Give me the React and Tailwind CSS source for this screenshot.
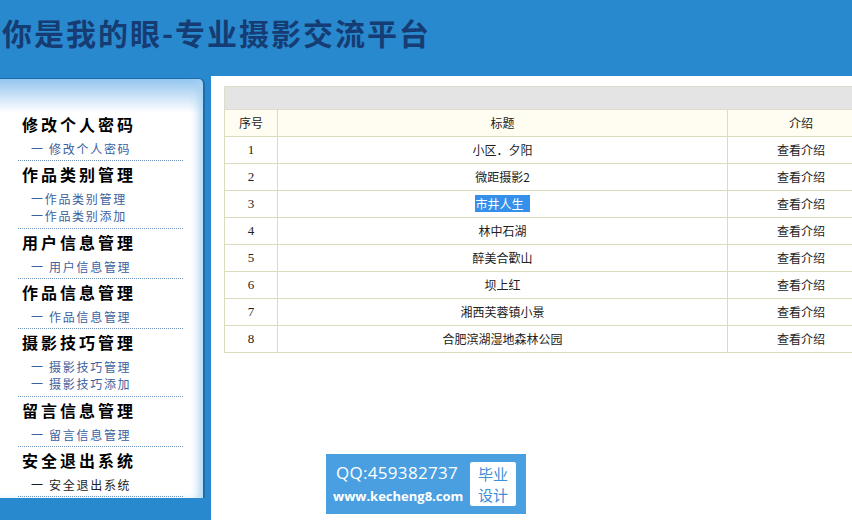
import React from "react";

const menu = [
  { title: "修改个人密码", items: ["一 修改个人密码"] },
  { title: "作品类别管理", items: ["一作品类别管理", "一作品类别添加"] },
  { title: "用户信息管理", items: ["一 用户信息管理"] },
  { title: "作品信息管理", items: ["一 作品信息管理"] },
  { title: "摄影技巧管理", items: ["一 摄影技巧管理", "一 摄影技巧添加"] },
  { title: "留言信息管理", items: ["一 留言信息管理"] },
  { title: "安全退出系统", items: ["一 安全退出系统"], dark: true },
];

const rows = [
  "小区．夕阳",
  "微距摄影2",
  "市井人生",
  "林中石湖",
  "醉美合歡山",
  "坝上红",
  "湘西芙蓉镇小景",
  "合肥滨湖湿地森林公园",
];

const cjk = { fontFamily: '"Noto Sans CJK SC", sans-serif' };

const App = () => {
  return (
    <div
      className="relative w-[852px] h-[520px] bg-[#2989cf] flex flex-col overflow-hidden"
      style={cjk}
    >
      {/* header */}
      <div className="h-[77px] shrink-0 pl-[2px] pt-[11px]">
        <h1 className="text-[30px] leading-[42px] font-bold tracking-[2px] text-[#163c74]">
          你是我的眼-专业摄影交流平台
        </h1>
      </div>

      <div className="flex flex-1 min-h-0">
        {/* sidebar */}
        <div className="w-[211px] shrink-0 flex flex-col">
          <div className="mt-[1px] w-[205px] h-[420px] rounded-tr-[6px] border-t border-r-2 border-[#1d6cab] bg-gradient-to-b from-[#93c5ee] via-white via-[8%] to-white shadow-[inset_-8px_0_10px_-4px_#a8d2f4] pt-[32px]">
            {menu.map((m) => (
              <div
                key={m.title}
                className={`ml-[18px] w-[165px] border-b border-dotted border-[#6f93b8] ${m.items.length > 1 ? "pb-[4px]" : "pb-[3px]"}`}
              >
                <div className="h-[26px] leading-[26px] pl-[4px] text-[16px] font-bold tracking-[3px] text-black">
                  {m.title}
                </div>
                <div className="mt-[3px]">
                  {m.items.map((it) => (
                    <div
                      key={it}
                      className={`pl-[13px] h-[17px] leading-[17px] text-[12px] tracking-[1.7px] whitespace-pre ${m.dark ? "text-[#222]" : "text-[#3b61a0]"}`}
                    >
                      {it}
                    </div>
                  ))}
                </div>
              </div>
            ))}
          </div>
        </div>

        {/* main */}
        <div className="flex-1 bg-white -mt-[1px] pl-[13px] pt-[10px] overflow-hidden">
          <table className="w-[651px] border-collapse text-[12px] text-[#222]">
            <thead>
              <tr>
                <th colSpan={3} className="h-[23px] bg-[#e4e4e4] border border-[#dcdcc8]"></th>
              </tr>
              <tr className="bg-[#fffcf1]">
                <th className="w-[53px] h-[27px] border border-[#dcdcbc] font-normal">序号</th>
                <th className="w-[450px] border border-[#dcdcbc] font-normal">标题</th>
                <th className="border border-[#dcdcbc] font-normal">介绍</th>
              </tr>
            </thead>
            <tbody>
              {rows.map((r, i) => (
                <tr key={r}>
                  <td
                    className="h-[27px] border border-[#dcdcbc] text-center text-[13px]"
                    style={{ fontFamily: '"Liberation Serif", serif' }}
                  >
                    {i + 1}
                  </td>
                  <td className="border border-[#dcdcbc] text-center">
                    {i === 2 ? (
                      <span className="bg-[#3590ea] text-white pr-[6px]">{r}</span>
                    ) : (
                      r
                    )}
                  </td>
                  <td className="border border-[#dcdcbc] text-center">查看介绍</td>
                </tr>
              ))}
            </tbody>
          </table>
        </div>
      </div>

      {/* watermark badge */}
      <div className="absolute left-[326px] top-[454px] w-[200px] h-[60px] bg-[#4a9fe1] flex items-center pl-[7px] pr-[10px]">
        <div className="flex-1 text-white">
          <div className="text-[17px] leading-[20px] pl-[3px] tracking-[0.3px]" style={{ fontFamily: '"Open Sans", sans-serif' }}>
            QQ:459382737
          </div>
          <div className="text-[13px] leading-[20px] mt-[3px] font-bold" style={{ fontFamily: '"Open Sans", sans-serif' }}>
            www.kecheng8.com
          </div>
        </div>
        <div className="w-[46px] h-[44px] bg-white rounded-[2px] flex flex-col items-center justify-center text-[#3d8fd6] text-[15px] leading-[21px]">
          <span>毕业</span>
          <span>设计</span>
        </div>
      </div>
    </div>
  );
};

export default App;
